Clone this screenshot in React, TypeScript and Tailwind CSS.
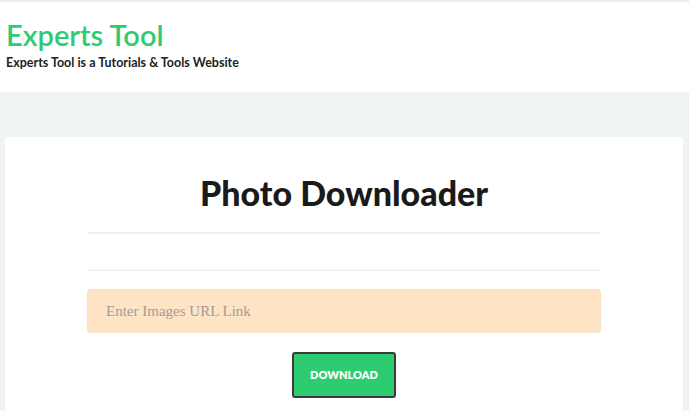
export default function App() {
  return (
    <div className="min-h-[411px] bg-[#f0f3f4] font-['Lato',sans-serif]">
      <header className="h-[92px] border-t-2 border-[#ececec] bg-white px-[6px] pt-[16px]">
        <h1 className="text-[29px] font-semibold leading-[34px] text-[#2ecc71]">Experts Tool</h1>
        <p className="mt-[2px] text-[12.5px] font-bold text-[#222]">
          Experts Tool is a Tutorials &amp; Tools Website
        </p>
      </header>

      <main className="px-[5px] pt-[45px]">
        <section className="mr-[1px] bg-white px-[82px] pt-[36px] pb-[20px]">
          <h2 className="text-center text-[34px] font-black leading-[40px] text-[#1a1a1a]">
            Photo Downloader
          </h2>
          <hr className="mt-[19px] border-t-2 border-[#f2f2f2]" />
          <hr className="mt-[35px] border-t-2 border-[#f2f2f2]" />
          <input
            type="text"
            placeholder="Enter Images URL Link"
            className="mt-[18px] block h-[44px] w-full rounded-[3px] border border-[#f5e3cc] bg-[#fee3c4] px-[18px] font-['Liberation_Serif',serif] text-[15px] text-[#333] placeholder:text-[#a39d96] outline-none"
          />
          <div className="mt-[19px] flex justify-center">
            <button className="h-[46px] w-[104px] rounded-[3px] border-2 border-[#3a3a3a] bg-[#2ecc71] text-[11px] font-extrabold text-white">
              DOWNLOAD
            </button>
          </div>
        </section>
      </main>
    </div>
  );
}
